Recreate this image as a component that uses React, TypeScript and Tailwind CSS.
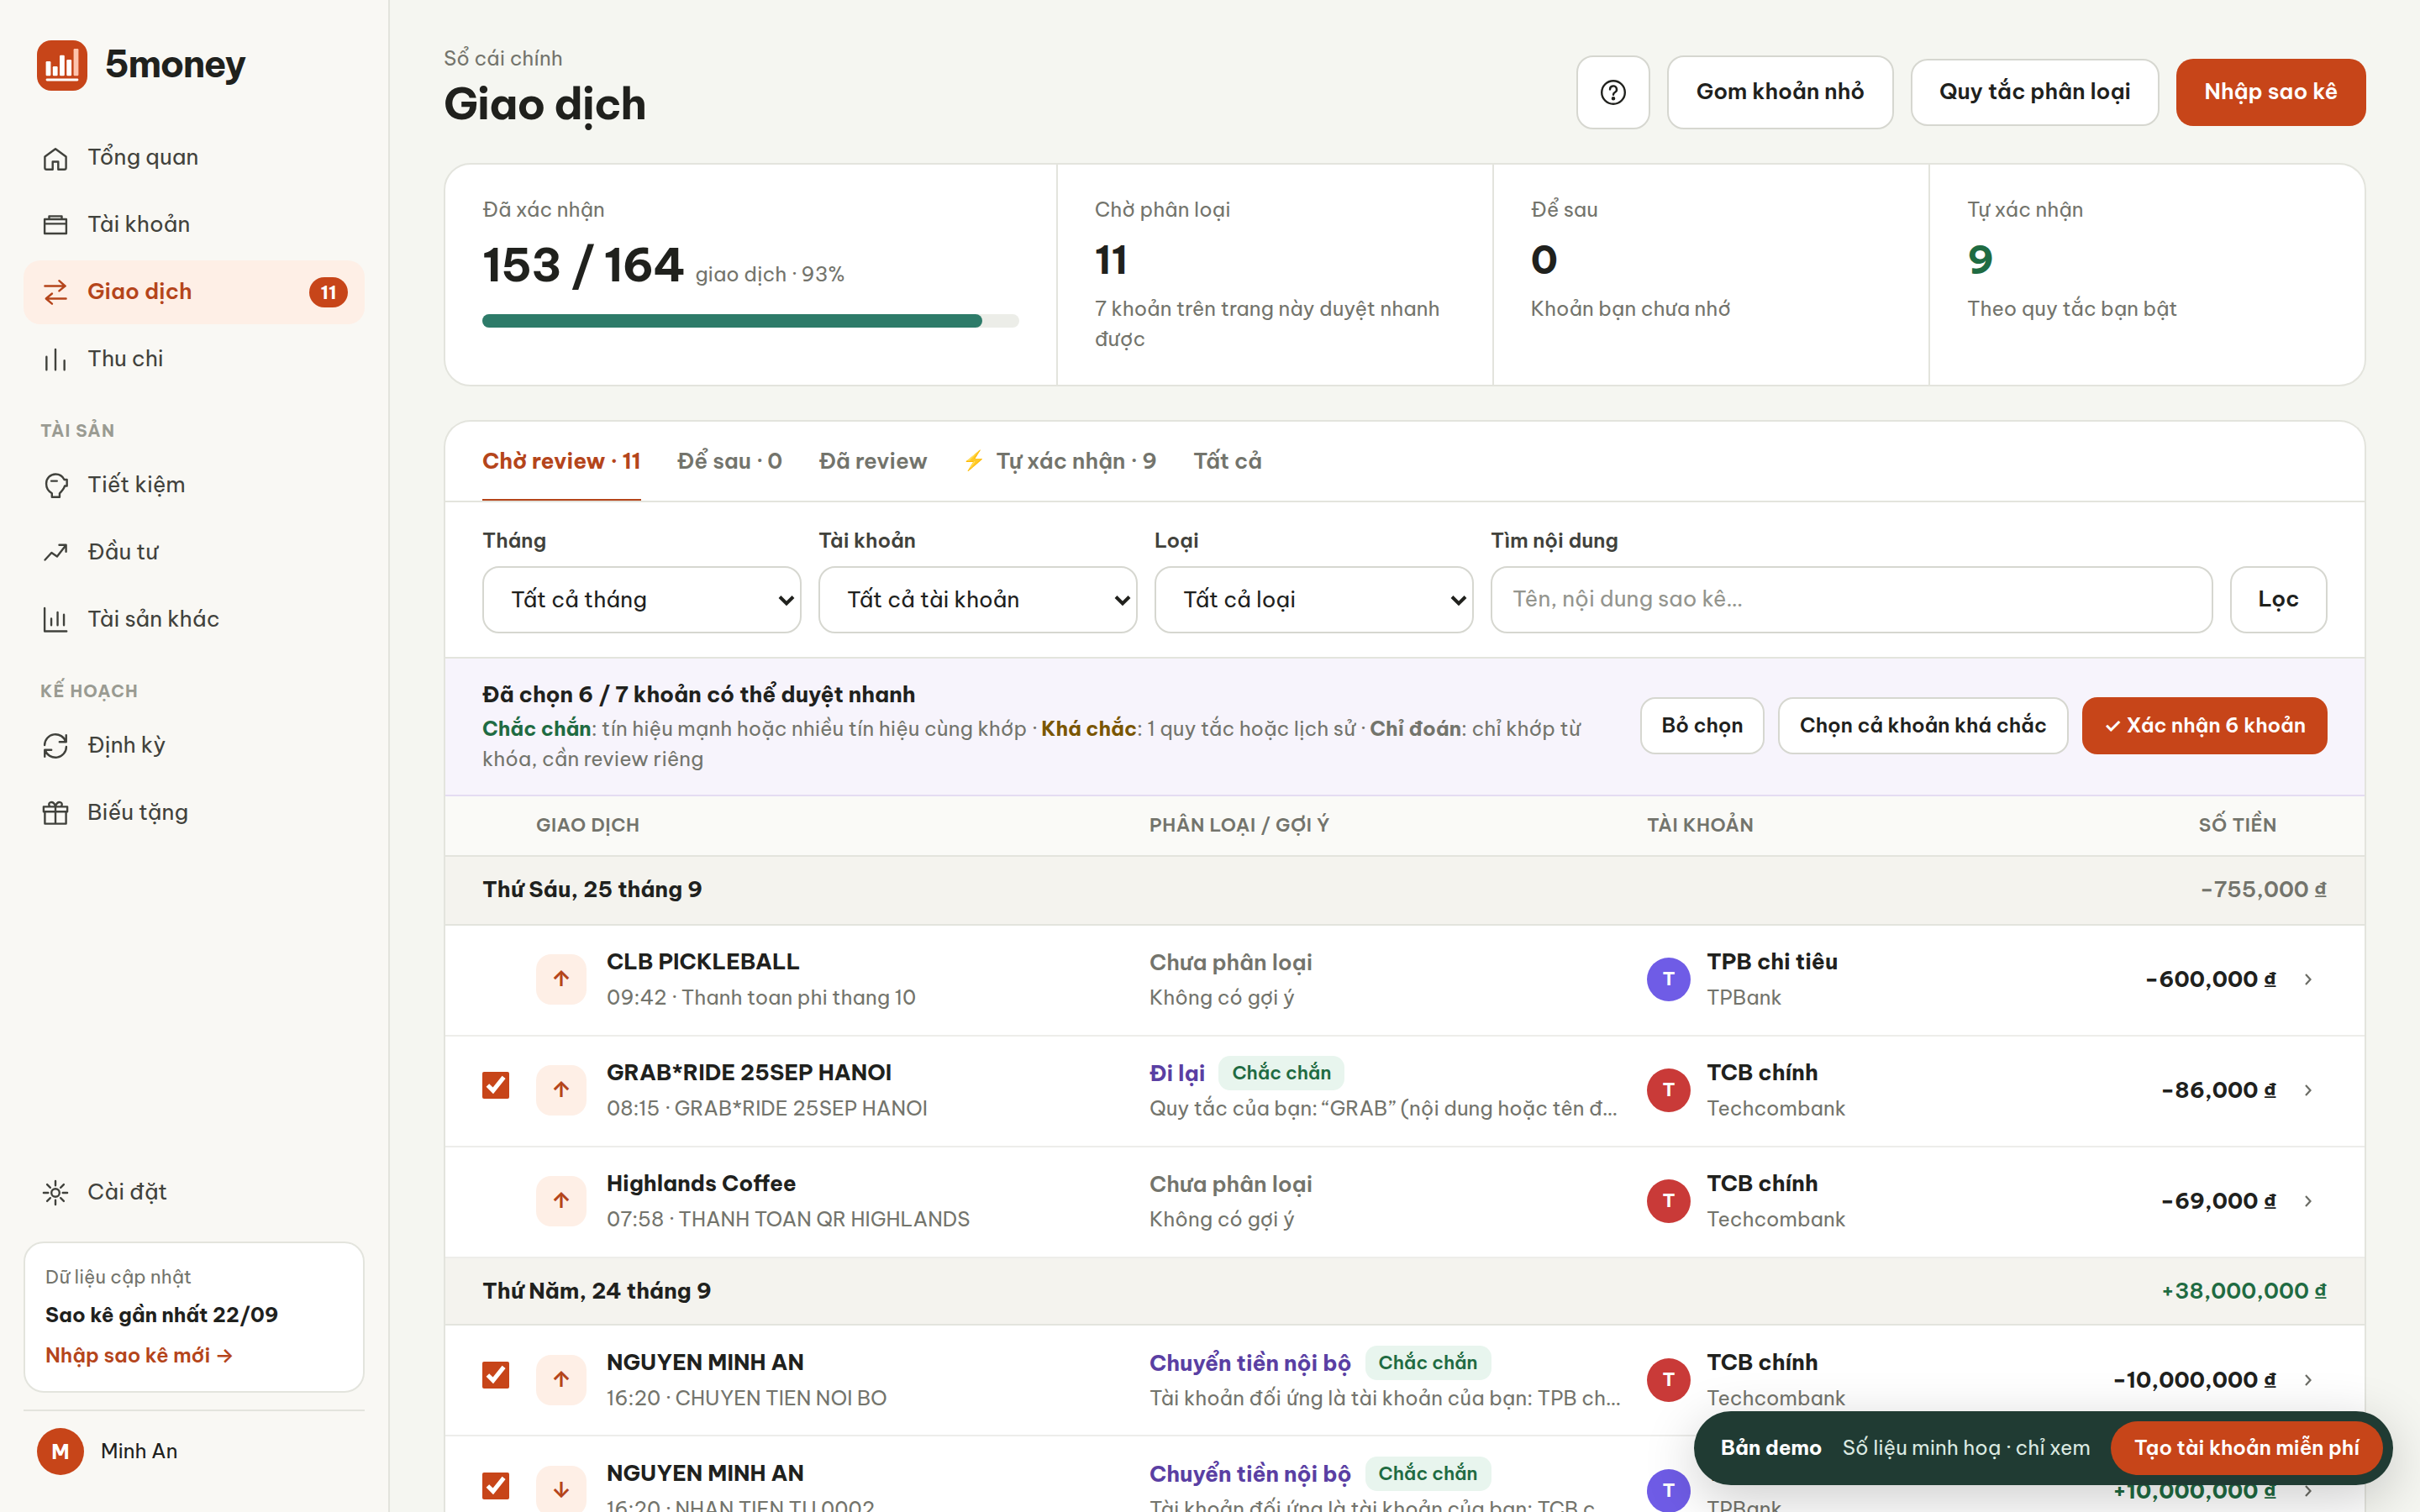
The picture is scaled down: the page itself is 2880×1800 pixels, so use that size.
import type { ReactNode } from "react"
import clsx from "clsx"

type NavItem = { name: string; icon: ReactNode; active?: boolean; badge?: string }

type Account = { name: string; bank: string; tone: string }

type Transaction = {
  title: string
  detail: string
  direction: "up" | "down"
  category?: string
  hint: string
  account: Account
  amount: string
  positive?: boolean
  checked?: boolean
}

type DayGroup = { day: string; total: string; positive?: boolean; items: Transaction[] }

const mainNav: NavItem[] = [
  {
    name: "Tổng quan",
    icon: <path d="M3.6 11 12 4.8l8.4 6.2v8.8a1.4 1.4 0 0 1-1.4 1.4h-4.8v-6.2h-4.4v6.2H5a1.4 1.4 0 0 1-1.4-1.4z" />,
  },
  {
    name: "Tài khoản",
    icon: <path d="M3.4 7.3h17.2v11.4H3.4zM3.4 10.9h17.2M7 7.3V4.9h10v2.4" />,
  },
  {
    name: "Giao dịch",
    icon: <path d="M3.6 7h16.2M14.9 2.8 19.6 7l-4.7 3.9M20.4 17H4.6M9.3 13l-4.8 4 4.8 4.1" />,
    active: true,
    badge: "11",
  },
  {
    name: "Thu chi",
    icon: <path d="M4.9 9.8v10.4M12 3.9v16.3M19.1 12.8v7.4" />,
  },
]

const assetNav: NavItem[] = [
  {
    name: "Tiết kiệm",
    icon: (
      <path d="M9.2 18.2c-2.8-1.6-4.5-4.4-4.5-7.7C4.7 6.2 8 3 12.1 3c3.1 0 5.6 1.7 6.9 4.3h2.1v5h-1.7c-.7 2.4-2.3 4.2-4.1 5.9v3H9.2zM8.7 8.4h4.5" />
    ),
  },
  {
    name: "Đầu tư",
    icon: <path d="m3.7 17.7 5.2-5.7 4.4 3 7-9M15 5.8h5.4v5.4" />,
  },
  {
    name: "Tài sản khác",
    icon: <path d="M3.4 2.7V21h17.4M8.7 11v5.2M13.7 6v10.2M18.7 7.8v8.4" />,
  },
]

const planNav: NavItem[] = [
  {
    name: "Định kỳ",
    icon: <path d="M3.4 11.4a8.6 8.6 0 0 1 16.8-2.6M20.5 3.5v5.3h-5.3M20.6 12.6a8.6 8.6 0 0 1-16.8 2.6M3.5 20.5v-5.3h5.3" />,
  },
  {
    name: "Biếu tặng",
    icon: (
      <path d="M2.6 6.9h18.8v3.9H2.6zM3.6 10.8v9.6h16.8v-9.6M12 6.9v13.5M12 6.6c-.8-2.6-2.4-3.4-3.8-3.2-1.6.3-1.8 2.3-.6 3.2M12 6.6c.8-2.6 2.4-3.4 3.8-3.2 1.6.3 1.8 2.3.6 3.2" />
    ),
  },
]

const settingsNav: NavItem[] = [
  {
    name: "Cài đặt",
    icon: (
      <>
        <circle cx="12" cy="12" r="3.2" />
        <path d="M12 2.6v3.6M12 17.8v3.6M2.6 12h3.6M17.8 12h3.6M5.4 5.4l2.5 2.5M16.1 16.1l2.5 2.5M5.4 18.6l2.5-2.5M16.1 7.9l2.5-2.5" />
      </>
    ),
  },
]

const tpb: Account = { name: "TPB chi tiêu", bank: "TPBank", tone: "bg-[#6f5ce6]" }
const tcb: Account = { name: "TCB chính", bank: "Techcombank", tone: "bg-[#c93a38]" }

const groups: DayGroup[] = [
  {
    day: "Thứ Sáu, 25 tháng 9",
    total: "−755,000 ₫",
    items: [
      {
        title: "CLB PICKLEBALL",
        detail: "09:42 · Thanh toan phi thang 10",
        direction: "up",
        hint: "Không có gợi ý",
        account: tpb,
        amount: "−600,000 ₫",
      },
      {
        title: "GRAB*RIDE 25SEP HANOI",
        detail: "08:15 · GRAB*RIDE 25SEP HANOI",
        direction: "up",
        category: "Đi lại",
        hint: "Quy tắc của bạn: “GRAB” (nội dung hoặc tên đ…",
        account: tcb,
        amount: "−86,000 ₫",
        checked: true,
      },
      {
        title: "Highlands Coffee",
        detail: "07:58 · THANH TOAN QR HIGHLANDS",
        direction: "up",
        hint: "Không có gợi ý",
        account: tcb,
        amount: "−69,000 ₫",
      },
    ],
  },
  {
    day: "Thứ Năm, 24 tháng 9",
    total: "+38,000,000 ₫",
    positive: true,
    items: [
      {
        title: "NGUYEN MINH AN",
        detail: "16:20 · CHUYEN TIEN NOI BO",
        direction: "up",
        category: "Chuyển tiền nội bộ",
        hint: "Tài khoản đối ứng là tài khoản của bạn: TPB ch…",
        account: tcb,
        amount: "−10,000,000 ₫",
        checked: true,
      },
      {
        title: "NGUYEN MINH AN",
        detail: "16:20 · NHAN TIEN TU 0002",
        direction: "down",
        category: "Chuyển tiền nội bộ",
        hint: "Tài khoản đối ứng là tài khoản của bạn: TCB c…",
        account: tpb,
        amount: "+10,000,000 ₫",
        positive: true,
        checked: true,
      },
    ],
  },
]

const tabs = [
  { name: "Chờ review · 11", active: true },
  { name: "Để sau · 0" },
  { name: "Đã review" },
  { name: "Tự xác nhận · 9", bolt: true },
  { name: "Tất cả" },
]

const filters = [
  { label: "Tháng", value: "Tất cả tháng" },
  { label: "Tài khoản", value: "Tất cả tài khoản" },
  { label: "Loại", value: "Tất cả loại" },
]

const stats = [
  { label: "Chờ phân loại", value: "11", note: "7 khoản trên trang này duyệt nhanh được" },
  { label: "Để sau", value: "0", note: "Khoản bạn chưa nhớ" },
  { label: "Tự xác nhận", value: "9", note: "Theo quy tắc bạn bật", green: true },
]

const rowGrid = "grid grid-cols-[64px_730px_592px_minmax(0,1fr)_60px] px-11"

function Icon({ children }: { children: ReactNode }) {
  return (
    <svg
      viewBox="0 0 24 24"
      className="size-9 shrink-0"
      fill="none"
      stroke="currentColor"
      strokeWidth="1.6"
      strokeLinecap="round"
      strokeLinejoin="round"
    >
      {children}
    </svg>
  )
}

function Logo() {
  return (
    <svg viewBox="0 0 60 60" className="size-15">
      <rect width="60" height="60" rx="17" fill="#c74519" />
      <g fill="#fff">
        <rect x="10.6" y="25" width="5.8" height="17.3" rx="1.2" />
        <rect x="18.8" y="31" width="5.8" height="11.3" rx="1.2" />
        <rect x="27" y="17.7" width="5.8" height="24.6" rx="1.2" />
        <rect x="35.3" y="23" width="5.8" height="19.3" rx="1.2" />
        <rect x="43.6" y="10" width="5.8" height="32.3" rx="1.2" fill="#fdc3ac" />
        <rect x="10.6" y="45.6" width="38.8" height="2.8" rx="1.4" />
      </g>
    </svg>
  )
}

function NavList({ items }: { items: NavItem[] }) {
  return (
    <div className="flex flex-col gap-1">
      {items.map((item) => (
        <a
          key={item.name}
          href="#"
          className={clsx(
            "flex h-19 items-center gap-5 rounded-[20px] px-5 text-[26px]",
            item.active ? "bg-[#feefe6] font-semibold text-[#b5451b]" : "text-[#41423c]",
          )}
        >
          <Icon>{item.icon}</Icon>
          <span className="flex-1 pb-1">{item.name}</span>
          {item.badge && (
            <span className="flex h-9 w-[46px] items-center justify-center rounded-full bg-[#c74519] text-[22px] font-bold text-white">
              {item.badge}
            </span>
          )}
        </a>
      ))}
    </div>
  )
}

function NavLabel({ children }: { children: ReactNode }) {
  return (
    <div className="h-[74px] px-5 pt-8 text-[20px] leading-[30px] font-bold tracking-[0.06em] text-[#9a9b92]">
      {children}
    </div>
  )
}

function Sidebar() {
  return (
    <aside className="flex w-[464px] shrink-0 flex-col border-r-2 border-[#e3e4dd] bg-[#f9f8f4] px-7 pt-12 pb-11">
      <div className="mb-[42px] flex items-center gap-5 px-4">
        <Logo />
        <span className="pb-1 text-[44px] leading-[56px] font-bold tracking-[-0.03em]">5money</span>
      </div>
      <NavList items={mainNav} />
      <NavLabel>TÀI SẢN</NavLabel>
      <NavList items={assetNav} />
      <NavLabel>KẾ HOẠCH</NavLabel>
      <NavList items={planNav} />

      <div className="mt-auto">
        <NavList items={settingsNav} />
        <div className="mt-5 flex h-[180px] flex-col rounded-3xl border-2 border-[#e3e4dd] bg-white px-6 pt-[22px]">
          <span className="text-[22px] leading-9 tracking-[0.005em] text-[#73746c]">Dữ liệu cập nhật</span>
          <span className="mt-[7px] text-[24px] leading-10 font-bold">Sao kê gần nhất 22/09</span>
          <a href="#" className="mt-2 text-[24px] leading-10 font-semibold text-[#b5451b]">
            Nhập sao kê mới →
          </a>
        </div>
        <div className="mt-5 flex items-center gap-5 border-t-2 border-[#e3e4dd] px-4 pt-5">
          <span className="flex size-14 items-center justify-center rounded-full bg-[#c74519] text-[24px] font-bold text-white">
            M
          </span>
          <span className="pb-0.5 text-[24px]">Minh An</span>
        </div>
      </div>
    </aside>
  )
}

function Header() {
  return (
    <header className="flex h-[194px] justify-between">
      <div className="pt-[51px]">
        <p className="text-[24px] leading-9 text-[#73746c]">Sổ cái chính</p>
        <h1 className="mt-0.5 text-[52px] leading-[68px] font-bold tracking-[-0.024em]">Giao dịch</h1>
      </div>
      <div className="mt-[66px] flex h-22 items-center gap-5 text-[26px] font-semibold">
        <button className="flex size-22 items-center justify-center rounded-[20px] border-2 border-[#d6d7d0] bg-white">
          <svg viewBox="0 0 32 32" className="size-8" fill="none" stroke="currentColor" strokeWidth="2.4" strokeLinecap="round">
            <circle cx="16" cy="16" r="13.8" />
            <path d="M12 12.4a4 4 0 1 1 5.8 3.6c-1.3.7-1.8 1.4-1.8 2.8" />
            <circle cx="16" cy="23.3" r="1.1" fill="currentColor" />
          </svg>
        </button>
        <button className="h-22 w-[270px] rounded-[20px] border-2 border-[#d6d7d0] bg-white pb-[3px]">Gom khoản nhỏ</button>
        <button className="h-20 w-[296px] rounded-[20px] border-2 border-[#d6d7d0] bg-white pb-[3px]">Quy tắc phân loại</button>
        <button className="h-20 w-[226px] rounded-[20px] bg-[#c74519] pb-[3px] text-white">Nhập sao kê</button>
      </div>
    </header>
  )
}

function Summary() {
  return (
    <section className="grid h-[266px] grid-cols-[1.4fr_1fr_1fr_1fr] rounded-[32px] border-2 border-[#e3e4dd] bg-white text-[24px] leading-9 text-[#73746c]">
      <div className="px-11 pt-[35px]">
        <p>Đã xác nhận</p>
        <div className="mt-3 flex items-baseline gap-3">
          <span className="text-[54px] leading-[72px] font-bold tracking-[-0.02em] text-[#20211d]">153 / 164</span>
          <span>giao dịch · 93%</span>
        </div>
        <div className="mt-[23px] h-4 rounded-full bg-[#ecede8]">
          <div className="h-4 w-[93.2%] rounded-full bg-[#2d7b69]" />
        </div>
      </div>
      {stats.map((s) => (
        <div key={s.label} className="border-l-2 border-[#e3e4dd] px-11 pt-[35px]">
          <p>{s.label}</p>
          <p className={clsx("mt-2.5 text-[46px] leading-[64px] font-bold", s.green ? "text-[#1f6b42]" : "text-[#20211d]")}>
            {s.value}
          </p>
          <p className="mt-2">{s.note}</p>
        </div>
      ))}
    </section>
  )
}

function Filters() {
  return (
    <div className="flex items-end gap-5 border-b-2 border-[#e3e4dd] px-11 py-7">
      {filters.map((f) => (
        <label key={f.label} className="flex w-[380px] flex-col gap-[13px]">
          <span className="text-[24px] leading-[35px] font-semibold text-[#41423c]">{f.label}</span>
          <span className="relative">
            <select className="block h-20 w-full appearance-none rounded-[20px] border-2 border-[#d6d7d0] bg-white px-8 pb-px text-[26px]">
              <option>{f.value}</option>
            </select>
            <svg
              viewBox="0 0 20 14"
              className="absolute top-[34px] right-2 h-3.5 w-5"
              fill="none"
              stroke="currentColor"
              strokeWidth="4"
            >
              <path d="m2 2.5 8 8 8-8" />
            </svg>
          </span>
        </label>
      ))}
      <label className="flex flex-1 flex-col gap-[13px]">
        <span className="text-[24px] leading-[35px] font-semibold text-[#41423c]">Tìm nội dung</span>
        <input
          className="h-20 w-full rounded-[20px] border-2 border-[#d6d7d0] px-6 pb-[3px] text-[26px] placeholder:text-[#94958e]"
          placeholder="Tên, nội dung sao kê…"
        />
      </label>
      <button className="h-20 w-[116px] rounded-[20px] border-2 border-[#d6d7d0] pb-[3px] text-[26px] font-semibold">Lọc</button>
    </div>
  )
}

function BulkBar() {
  return (
    <div className="flex h-[164px] items-center gap-10 border-b-2 border-[#e4dcf2] bg-[#f7f4fc] px-11 pb-0.5">
      <div className="flex-1 text-[24px] leading-9 text-[#73746c]">
        <p className="mb-0.5 text-[26px] leading-10 font-bold text-[#20211d]">Đã chọn 6 / 7 khoản có thể duyệt nhanh</p>
        <p>
          <b className="font-bold text-[#1f6b42]">Chắc chắn</b>: tín hiệu mạnh hoặc nhiều tín hiệu cùng khớp ·{" "}
          <b className="font-bold text-[#7a5600]">Khá chắc</b>: 1 quy tắc hoặc lịch sử ·{" "}
          <b className="font-bold">Chỉ đoán</b>: chỉ khớp từ
          <br />
          khóa, cần review riêng
        </p>
      </div>
      <div className="flex gap-4 text-[24px] font-semibold">
        <button className="h-17 w-[148px] rounded-[18px] border-2 border-[#d6d7d0] bg-white pb-0.5">Bỏ chọn</button>
        <button className="h-17 w-[346px] rounded-[18px] border-2 border-[#d6d7d0] bg-white pb-0.5">
          Chọn cả khoản khá chắc
        </button>
        <button className="h-17 w-[292px] rounded-[18px] bg-[#c74519] pb-0.5 text-white">✓ Xác nhận 6 khoản</button>
      </div>
    </div>
  )
}

function Row({ item }: { item: Transaction }) {
  return (
    <div className={clsx(rowGrid, "h-[132px] items-center border-b-2 border-[#ededea]")}>
      <div>
        {item.checked && <input type="checkbox" defaultChecked className="mb-3 block size-8 accent-[#c74519]" />}
      </div>
      <div className="flex items-center gap-6">
        <span className="flex size-15 items-center justify-center rounded-[18px] bg-[#feefe6] pb-1 text-[26px] font-bold text-[#b5451b]">
          {item.direction === "up" ? "↑" : "↓"}
        </span>
        <div>
          <p className="text-[26px] leading-[42px] font-bold">{item.title}</p>
          <p className="text-[24px] leading-[42px] text-[#73746c]">{item.detail}</p>
        </div>
      </div>
      <div className="pr-5 whitespace-nowrap">
        <div className="flex h-[42px] items-center gap-4">
          <span className={clsx("text-[26px]", item.category ? "font-bold text-[#5a3fa3]" : "font-semibold text-[#73746c]")}>
            {item.category ?? "Chưa phân loại"}
          </span>
          {item.category && (
            <span className="rounded-[14px] bg-[#e8f5ee] px-4 text-[22px] leading-[41px] font-semibold text-[#1f6b42]">
              Chắc chắn
            </span>
          )}
        </div>
        <p className="text-[24px] leading-[42px] text-[#73746c]">{item.hint}</p>
      </div>
      <div className="flex items-center justify-between">
        <div className="flex items-center gap-[19px]">
          <span
            className={clsx(
              "flex size-13 items-center justify-center rounded-full pb-0.5 text-[22px] font-bold text-white",
              item.account.tone,
            )}
          >
            T
          </span>
          <div>
            <p className="text-[26px] leading-[42px] font-bold">{item.account.name}</p>
            <p className="text-[24px] leading-[42px] text-[#73746c]">{item.account.bank}</p>
          </div>
        </div>
        <span className={clsx("pb-0.5 text-[26px] font-bold tabular-nums", item.positive && "text-[#1f6b42]")}>
          {item.amount}
        </span>
      </div>
      <svg viewBox="0 0 10 16" className="ml-8 h-4 w-2.5" fill="none" stroke="#6b6c65" strokeWidth="2.2">
        <path d="m2 2 5.5 6L2 14" />
      </svg>
    </div>
  )
}

function DemoToast() {
  return (
    <div className="absolute right-8 bottom-8 flex h-22 w-[832px] items-center justify-between rounded-full bg-[#203b33] pr-3 pl-8 text-[24px] shadow-[0_16px_64px_rgba(0,0,0,0.2)]">
      <span className="pb-0.5 font-bold text-white">Bản demo</span>
      <span className="pb-0.5 text-[#dbe9e1]">Số liệu minh hoạ · chỉ xem</span>
      <button className="h-16 w-[324px] rounded-full bg-[#c74519] pb-0.5 font-semibold text-white">
        Tạo tài khoản miễn phí
      </button>
    </div>
  )
}

export default function App() {
  return (
    <div className="relative flex h-[1800px] w-[2880px] overflow-hidden bg-[#f5f6f1] font-['Be_Vietnam_Pro',Inter,sans-serif] text-[#20211d]">
      <Sidebar />
      <main className="min-w-0 flex-1 px-16">
        <Header />
        <Summary />
        <section className="mt-10 overflow-hidden rounded-t-[32px] border-2 border-b-0 border-[#e3e4dd] bg-white">
          <nav className="flex h-24 gap-[43px] border-b-2 border-[#e3e4dd] px-11 text-[26px] font-semibold text-[#73746c]">
            {tabs.map((tab) => (
              <a
                key={tab.name}
                href="#"
                className={clsx(
                  "flex items-center border-b-2",
                  tab.active ? "border-[#b5451b] font-bold text-[#b5451b]" : "border-transparent",
                )}
              >
                {tab.bolt && <span className="-ml-0.5 w-10 text-[23px]">⚡</span>}
                {tab.name}
              </a>
            ))}
          </nav>
          <Filters />
          <BulkBar />
          <div
            className={clsx(
              rowGrid,
              "h-[72px] items-center border-b-2 border-[#e3e4dd] bg-[#fafaf7] pb-0.5 text-[22px] font-semibold tracking-[0.025em] text-[#73746c]",
            )}
          >
            <span />
            <span>GIAO DỊCH</span>
            <span>PHÂN LOẠI / GỢI Ý</span>
            <div className="flex justify-between">
              <span>TÀI KHOẢN</span>
              <span>SỐ TIỀN</span>
            </div>
          </div>
          {groups.map((group, index) => (
            <div key={group.day}>
              <div
                className={clsx(
                  "flex items-center justify-between border-b-2 border-[#e3e4dd] bg-[#f4f3ee] px-11 text-[26px]",
                  index === 0 ? "h-[82px] pb-[3px]" : "h-20 pb-0.5",
                )}
              >
                <span className="font-bold">{group.day}</span>
                <span className={clsx("font-semibold tabular-nums", group.positive ? "text-[#1f6b42]" : "text-[#73746c]")}>
                  {group.total}
                </span>
              </div>
              <div className={clsx(index === 0 && "*:pb-0.5")}>
                {group.items.map((item) => (
                  <Row key={item.detail} item={item} />
                ))}
              </div>
            </div>
          ))}
        </section>
      </main>
      <DemoToast />
    </div>
  )
}
